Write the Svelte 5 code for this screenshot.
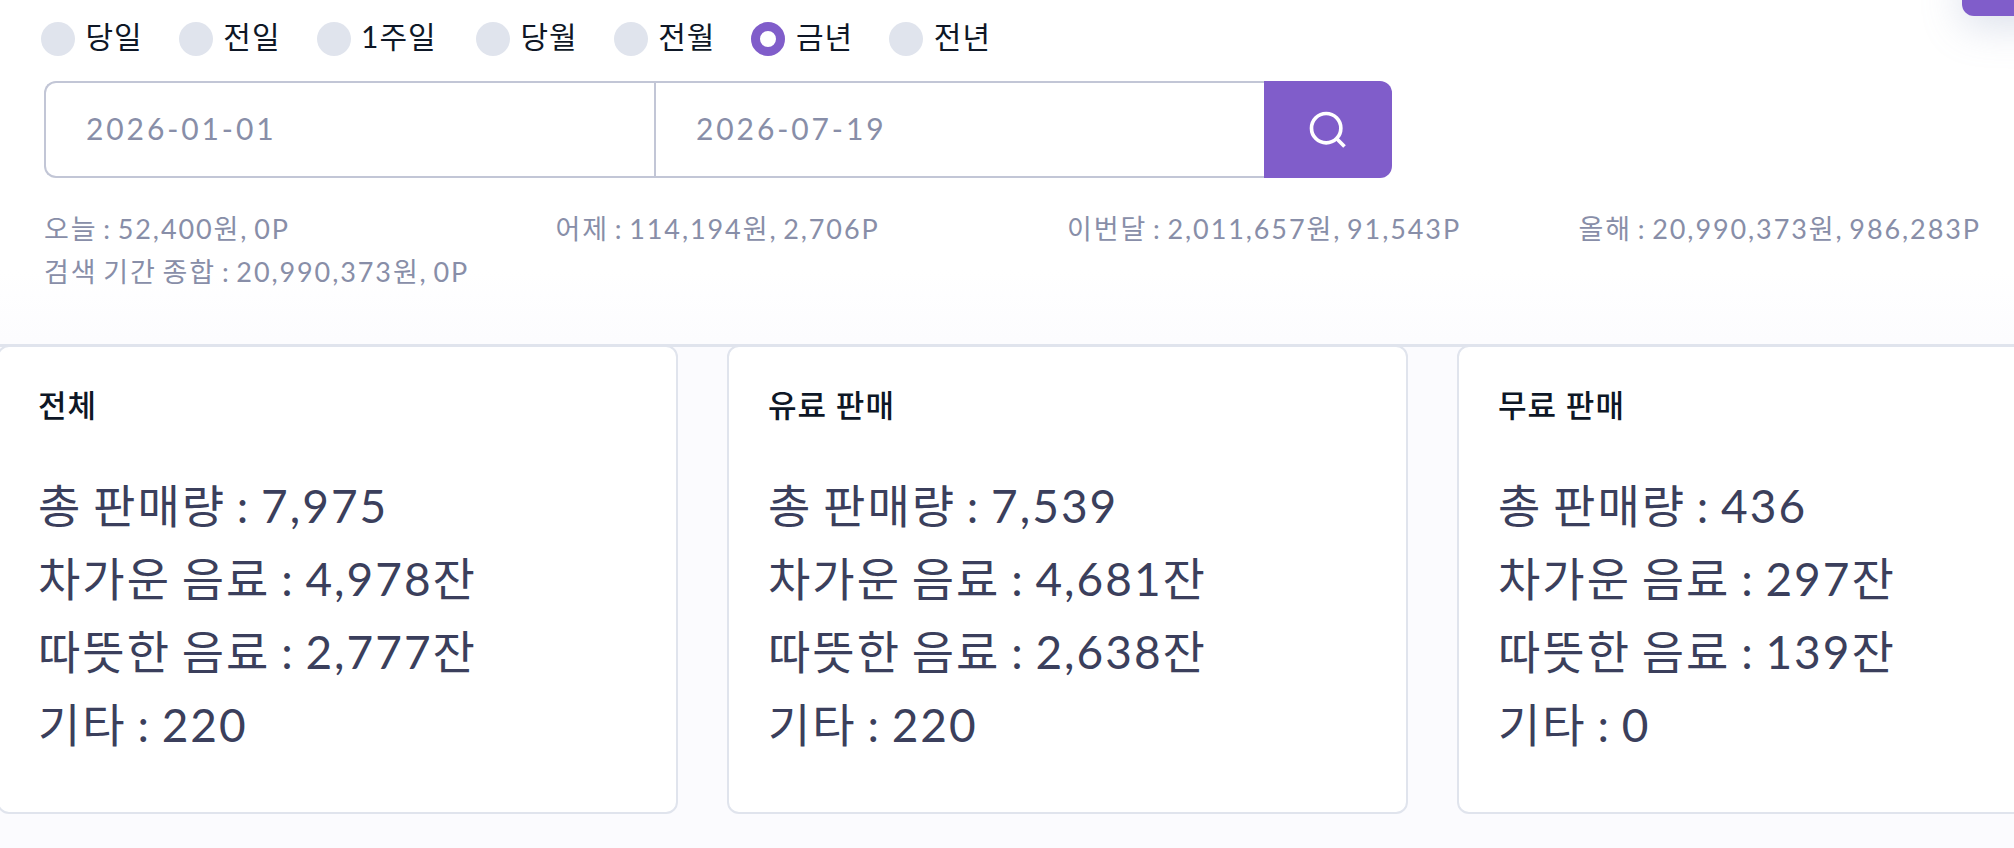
<script lang="ts">
	const periods = ['당일', '전일', '1주일', '당월', '전월', '금년', '전년'];
	const selected = '금년';

	const summary = [
		'오늘 : 52,400원, 0P',
		'어제 : 114,194원, 2,706P',
		'이번달 : 2,011,657원, 91,543P',
		'올해 : 20,990,373원, 986,283P',
		'검색 기간 종합 : 20,990,373원, 0P'
	];

	const cards = [
		{
			title: '전체',
			lines: ['총 판매량 : 7,975', '차가운 음료 : 4,978잔', '따뜻한 음료 : 2,777잔', '기타 : 220']
		},
		{
			title: '유료 판매',
			lines: ['총 판매량 : 7,539', '차가운 음료 : 4,681잔', '따뜻한 음료 : 2,638잔', '기타 : 220']
		},
		{
			title: '무료 판매',
			lines: ['총 판매량 : 436', '차가운 음료 : 297잔', '따뜻한 음료 : 139잔', '기타 : 0']
		}
	];
</script>

<div class="page">
	<div class="fab"></div>

	<section class="panel">
		<div class="radios">
			{#each periods as period}
				<label class="radio">
					<span class="dot" class:on={period === selected}></span>
					<span class="text">{period}</span>
				</label>
			{/each}
		</div>

		<div class="search">
			<input class="date first" value="2026-01-01" readonly />
			<input class="date" value="2026-07-19" readonly />
			<button class="go" aria-label="검색">
				<svg
					width="44"
					height="44"
					viewBox="0 0 24 24"
					fill="none"
					stroke="currentColor"
					stroke-width="2"
				>
					<circle cx="11" cy="11" r="8" />
					<line x1="21" y1="21" x2="16.65" y2="16.65" />
				</svg>
			</button>
		</div>

		<div class="summary">
			{#each summary as item}
				<p>{item}</p>
			{/each}
		</div>
	</section>

	<section class="cards">
		{#each cards as card}
			<article class="card">
				<h3>{card.title}</h3>
				{#each card.lines as line}
					<p>{line}</p>
				{/each}
			</article>
		{/each}
	</section>
</div>

<style>
	:global(body) {
		margin: 0;
		font-family: Lato, 'Noto Sans CJK KR', 'Noto Sans', sans-serif;
		letter-spacing: 1px;
	}

	.page {
		position: relative;
		height: 848px;
		overflow: hidden;
		background: #fbfbfe;
	}

	.fab {
		position: absolute;
		top: -40px;
		left: 1962px;
		width: 120px;
		height: 56px;
		border-radius: 12px;
		background: #805dca;
		box-shadow: 0 10px 40px rgba(136, 152, 190, 0.3);
		z-index: 2;
	}

	.panel {
		box-sizing: border-box;
		height: 347px;
		padding: 22px 0 0 44px;
		background: linear-gradient(#fff 270px, #fcfcfe 340px);
		border-bottom: 3px solid #e0e4ed;
	}

	.radios {
		display: flex;
		margin-left: -3px;
		height: 34px;
	}

	.radio {
		display: flex;
		align-items: center;
		gap: 10.5px;
		margin-right: 36.1px;
		font-size: 30px;
		line-height: 34px;
		color: #0e1726;
	}

	.radio:nth-child(3) {
		margin-right: 39.2px;
	}

	.text {
		margin-top: -6px;
	}

	.dot {
		box-sizing: border-box;
		width: 34px;
		height: 34px;
		border-radius: 50%;
		background: #e0e4ed;
	}

	.dot.on {
		background: #fff;
		border: 9px solid #805dca;
	}

	.search {
		display: flex;
		width: 1348px;
		height: 97px;
		margin-top: 25px;
	}

	.date {
		box-sizing: border-box;
		width: 610px;
		min-width: 0;
		padding: 0 40px 4px;
		border: 2px solid #c2c6d6;
		border-right: none;
		background: #fff;
		font: inherit;
		font-size: 30px;
		letter-spacing: 2.9px;
		color: #888ea8;
		outline: none;
	}

	.date.first {
		border-radius: 12px 0 0 12px;
	}

	.go {
		flex: 1;
		display: flex;
		align-items: center;
		justify-content: center;
		padding: 0;
		border: none;
		border-radius: 0 12px 12px 0;
		background: #805dca;
		color: #fff;
	}

	.summary {
		display: grid;
		grid-template-columns: repeat(3, 511.5px) 1fr;
		margin-top: 29px;
		font-size: 27px;
		line-height: 43px;
		letter-spacing: 1.9px;
		word-spacing: -3px;
		color: #888ea8;
	}

	.summary p {
		margin: 0;
	}

	.cards {
		display: flex;
		gap: 49px;
		margin: -2px 0 0 -3px;
	}

	.card {
		box-sizing: border-box;
		flex: 0 0 681px;
		height: 469px;
		padding: 38px 39px 0;
		background: #fff;
		border: 2px solid #e0e4ed;
		border-radius: 12px;
	}

	.card h3 {
		margin: 0 0 44px;
		font-size: 31px;
		line-height: 40px;
		font-weight: 500;
		color: #0e1726;
	}

	.card p {
		margin: 0;
		font-size: 46px;
		line-height: 73px;
		letter-spacing: 2px;
		word-spacing: -3px;
		color: #3b3f5c;
	}
</style>
